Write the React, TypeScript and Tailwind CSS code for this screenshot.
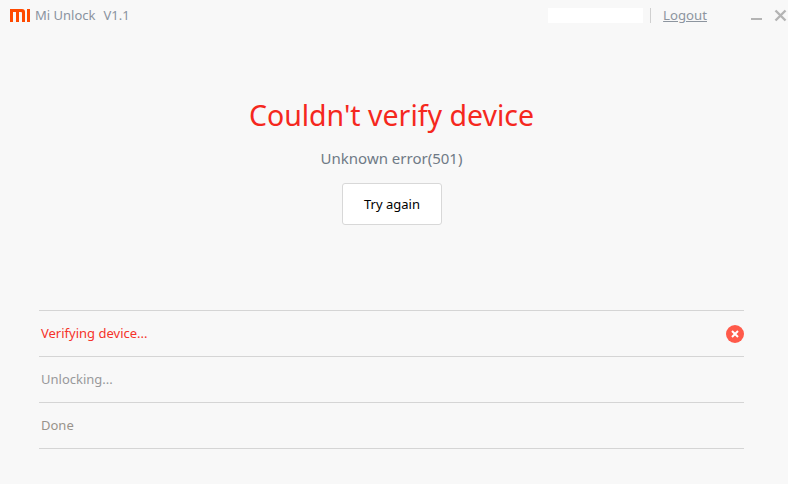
export default function App() {
  const font = { fontFamily: '"Noto Sans", "Open Sans", sans-serif' };
  return (
    <div style={font} className="w-[788px] h-[484px] bg-[#f8f8f8] flex flex-col overflow-hidden">
      <header className="h-[31px] flex items-center pl-[10px] pr-[1px] shrink-0">
        <svg width="20" height="13" viewBox="0 0 20 13" className="shrink-0">
          <path d="M0 0h12a3 3 0 0 1 3 3v10h-3V4a1 1 0 0 0-1-1H9v10H6V3H3v10H0z" fill="#ff4a00" />
          <rect x="17" y="0" width="3" height="13" fill="#ff4a00" />
        </svg>
        <span className="ml-[5px] text-[13px] text-[#8a939f] leading-none">Mi Unlock</span>
        <span className="ml-[8px] text-[13px] text-[#8a939f] leading-none">V1.1</span>
        <div className="ml-auto w-[95px] h-[15px] bg-white" />
        <div className="ml-[7px] w-px h-[15px] bg-[#d0d0d0]" />
        <a className="ml-[12px] text-[13.2px] text-[#8d959f] underline leading-none">Logout</a>
        <svg width="12" height="12" viewBox="0 0 12 12" className="ml-[44px] mt-[1px]">
          <rect x="0" y="8" width="11" height="2" fill="#b4b4b4" />
        </svg>
        <svg width="14" height="14" viewBox="0 0 14 14" className="ml-[10px]">
          <path d="M2.5 1.5l10 10M12.5 1.5l-10 10" stroke="#b4b4b4" strokeWidth="2.4" />
        </svg>
      </header>
      <main className="w-[783px] flex flex-col items-center">
        <h1 className="mt-[62px] text-[28.5px] leading-[44px] text-[#f5281e] font-normal">Couldn't verify device</h1>
        <p className="mt-[10px] text-[15px] leading-[22px] text-[#6f7a86]">Unknown error(501)</p>
        <button className="mt-[14px] w-[100px] h-[42px] bg-white border border-[#d8d8d8] rounded-[3px] text-[13px] text-black pt-[2px] pl-[1px]">Try again</button>
      </main>
      <section className="mt-[85px] ml-[39px] w-[705px] border-t border-[#d5d5d5] text-[13px]">
        <div className="h-[46px] border-b border-[#d5d5d5] flex items-center justify-between pl-[2px]">
          <span className="text-[#f5332a]">Verifying device...</span>
          <span className="w-[18px] h-[18px] rounded-full bg-[#ff5a4a] flex items-center justify-center">
            <svg width="8" height="8" viewBox="0 0 8 8"><path d="M1 1l6 6M7 1L1 7" stroke="#fff" strokeWidth="2" /></svg>
          </span>
        </div>
        <div className="h-[46px] border-b border-[#d5d5d5] flex items-center pl-[2px] text-[#99999b]">Unlocking...</div>
        <div className="h-[46px] border-b border-[#d5d5d5] flex items-center pl-[2px] text-[#99938b]">Done</div>
      </section>
    </div>
  );
}
